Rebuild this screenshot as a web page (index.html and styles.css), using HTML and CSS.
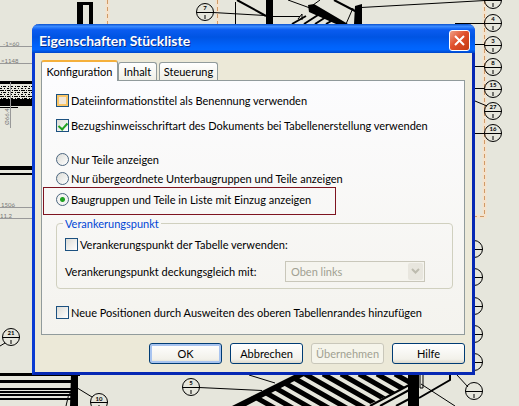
FILE: index.html
```html
<!DOCTYPE html>
<html lang="de">
<head>
    <meta charset="UTF-8">
    <meta name="viewport" content="width=device-width, initial-scale=1.0">
    <title>Eigenschaften Stückliste</title>
    <link rel="stylesheet" href="styles.css">
</head>
<body>

    <svg class="drawing" viewBox="0 0 519 406" preserveAspectRatio="xMidYMid slice" aria-hidden="true">
        <defs>
            <pattern id="dots" width="7" height="6" patternUnits="userSpaceOnUse">
                <path d="M0 .5h4M5 .5h1M1 2.5h1M3 2.5h3M0 4.5h2M4 4.5h1" stroke="#000"/>
            </pattern>
            <clipPath id="roof"><path d="M232 406L300 374H412V384L366 406Z"/></clipPath>
            <g id="balloon">
                <circle r="8.5"/>
                <path d="M-8.5 .5h17M0 3v4"/>
            </g>
        </defs>

        <!-- Blattrahmen -->
        <g class="frame-glow">
            <path d="M107.5 0V24M217.5 0V24M484.5 0V216.500H475"/>
        </g>
        <g class="frame">
            <path d="M107.5 0V24M217.5 0V24M484.5 0V216.500H475"/>
        </g>

        <!-- Ansicht oben -->
        <path d="M77 2H93V24H89V5H83V24H77ZM266 0H273V24H266ZM355 6L362 4V24H354ZM308 5L314 4L348 24H336L309 12Z"/>
        <g class="line">
            <path d="M213 12.500L265 15.500M273 16.500H300M235.500 2V24M361 7.500L485 .500M288 0L310 8M298 19L302 14V20M353 8L346 24M313 5L320 0M455 23.500H484M475 44.500H484M475 66.500H484M475 88.500H484M475 101L487 106M475 133.500H484"/>
            <path class="thick" d="M237 0L266 16M334 0L357 12M292 24L306 16M304 24L318 15M315 24L326 17M326 24L333 20"/>
        </g>

        <!-- Ansicht links -->
        <path d="M0 81H32V84H0ZM0 99H32V106H0ZM0 107H18V108H0ZM0 166H32V170H0ZM0 173H32V175H0Z"/>
        <rect y="85" width="32" height="14" fill="url(#dots)"/>
        <g class="measure">
            <path d="M0 46.500H32M0 63.500H32M10.500 82V128M0 207.500H32M0 218.500H32"/>
            <text x="3" y="46">-1×60</text>
            <text x="1" y="63">×1148</text>
            <text x="1" y="207">1506</text>
            <text x="0" y="218">11.2</text>
            <text transform="translate(9 125) rotate(-90)">Ø66.4</text>
        </g>

        <!-- Ansicht unten links -->
        <path d="M0 373H80V376H0ZM0 380H72V383H0ZM0 388H72V390H0ZM0 391H72V393H0ZM0 394H72V396H0ZM0 398H72V400H0ZM71 374H78V406H70Z"/>
        <g class="line">
            <path d="M74 386L92 397M66 406Q67 396 73 388M0 346L5 343"/>
        </g>

        <!-- Ansicht unten -->
        <g class="stripes" clip-path="url(#roof)">
            <path d="M215 374l70 40M233 374l70 40M251 374l70 40M269 374l70 40M287 374l70 40M305 374l70 40M323 374l70 40M341 374l70 40M359 374l70 40M377 374l70 40M395 374l70 40"/>
        </g>
        <path d="M232 406L296 374H308L246 406ZM408 374H419V406H408Z"/>
        <g class="line">
            <path d="M199 387.500L262 390.500M249 375L275 383M421 384L455 406M457 375L468 387M420 374V388H423V374"/>
            <path class="thick" d="M370 406L411 384M380 406L411 389M396 406L411 398M419 398L450 380V374"/>
        </g>

        <!-- Positionsnummern -->
        <g class="balloons">
            <use href="#balloon" x="205" y="12"/>
            <use href="#balloon" x="493" y="0"/>
            <use href="#balloon" x="493" y="23"/>
            <use href="#balloon" x="493" y="45"/>
            <use href="#balloon" x="493" y="67"/>
            <use href="#balloon" x="493" y="89"/>
            <use href="#balloon" x="493" y="111"/>
            <use href="#balloon" x="493" y="133"/>
            <use href="#balloon" x="474" y="249"/>
            <use href="#balloon" x="474" y="277"/>
            <use href="#balloon" x="474" y="306"/>
            <use href="#balloon" x="474" y="334"/>
            <use href="#balloon" x="474" y="362"/>
            <use href="#balloon" x="474" y="391"/>
            <use href="#balloon" x="11" y="337"/>
            <use href="#balloon" x="191" y="387"/>
            <use href="#balloon" x="99" y="402"/>
        </g>
        <g class="numbers">
            <text x="205" y="10">7</text>
            <text x="493" y="21">4</text>
            <text x="493" y="43">3</text>
            <text x="493" y="65">8</text>
            <text x="493" y="87">15</text>
            <text x="493" y="109">27</text>
            <text x="493" y="131">16</text>
            <text x="11" y="335">21</text>
            <text x="191" y="385">5</text>
            <text x="99" y="401">10</text>
        </g>
    </svg>

    <form class="dialog" onsubmit="return false">
        <div class="titlebar">
            <h1>Eigenschaften Stückliste</h1>
            <button type="button" class="close" aria-label="Schließen">
                <svg viewBox="0 0 19 19"><path d="M5 5L14 14M14 5L5 14"/></svg>
            </button>
        </div>

        <div class="content">
            <div class="tabs" role="tablist">
                <button type="button" class="tab active" role="tab" aria-selected="true">Konfiguration</button>
                <button type="button" class="tab" role="tab" aria-selected="false">Inhalt</button>
                <button type="button" class="tab wide" role="tab" aria-selected="false">Steuerung</button>
            </div>

            <div class="pane" role="tabpanel">
                <div class="group checks">
                    <label class="option"><input type="checkbox" class="hot"> Dateiinformationstitel als Benennung verwenden</label>
                    <label class="option"><input type="checkbox" checked> Bezugshinweisschriftart des Dokuments bei Tabellenerstellung verwenden</label>
                </div>

                <div class="group radios">
                    <label class="option"><input type="radio" name="anzeige"> Nur Teile anzeigen</label>
                    <label class="option"><input type="radio" name="anzeige"> Nur übergeordnete Unterbaugruppen und Teile anzeigen</label>
                </div>
                <div class="marked">
                    <label class="option"><input type="radio" name="anzeige" checked> Baugruppen und Teile in Liste mit Einzug anzeigen</label>
                </div>

                <fieldset>
                    <legend>Verankerungspunkt</legend>
                    <label class="option"><input type="checkbox"> Verankerungspunkt der Tabelle verwenden:</label>
                    <div class="anchor">
                        <label for="ecke">Verankerungspunkt deckungsgleich mit:</label>
                        <div class="select">
                            <select id="ecke" disabled>
                                <option>Oben links</option>
                            </select>
                            <svg viewBox="0 0 15 17"><path d="M4 6L7.500 9.500L11 6"/></svg>
                        </div>
                    </div>
                </fieldset>

                <label class="option last"><input type="checkbox"> Neue Positionen durch Ausweiten des oberen Tabellenrandes hinzufügen</label>
            </div>

            <div class="buttons">
                <button type="submit" class="default">OK</button>
                <button type="button">Abbrechen</button>
                <button type="button" disabled>Übernehmen</button>
                <button type="button">Hilfe</button>
            </div>
        </div>
    </form>

</body>
</html>
```
FILE: styles.css
```css
* {
    box-sizing: border-box;
}
body {
    margin: 0;
    padding: 24px 44px 31px 32px;
    background-color: #e6e6dc;
    color: #000;
    font-family: Lato, Tahoma, sans-serif;
    font-size: 11px;
    line-height: 17px;
}
button, select {
    font: inherit;
    color: inherit;
}

/* Zeichnung im Hintergrund */
.drawing {
    position: absolute;
    top: 0;
    left: 0;
    width: 100%;
    height: 100%;
    z-index: -1;
}
.frame, .frame-glow, .line, .balloons, .stripes {
    fill: none;
    stroke: #000;
}
.frame {
    stroke: #d09a66;
    stroke-dasharray: 4 3;
}
.frame-glow {
    stroke: #f4e2cc;
    stroke-width: 4;
}
.thick {
    stroke-width: 2;
}
.stripes {
    stroke-width: 5;
}
.measure {
    fill: #777;
    font-size: 6px;
}
.measure path {
    stroke: #999;
}
.numbers {
    font-size: 6px;
    font-weight: bold;
    text-anchor: middle;
}

/* Dialog */
.dialog {
    background-color: #ece9d8;
    border: solid #0a3bd2;
    border-width: 0 3px 3px;
    border-right-color: #0628b4;
    border-bottom-color: #0628b4;
    border-radius: 7px 7px 0 0;
}
.titlebar {
    display: flex;
    align-items: center;
    justify-content: space-between;
    height: 29px;
    margin: 0 -3px;
    padding: 3px 5px 0 7px;
    border-radius: 7px 7px 0 0;
    background: linear-gradient(#0a50cc, #3c8cff 8%, #0a5cf0 20%, #0054e3 45%, #0062fa 75%, #0066ff 88%, #0046c8);
}
.titlebar h1 {
    margin: 0;
    color: #fff;
    font-size: 14px;
    font-weight: bold;
    text-shadow: 1px 1px #0a2f8c;
}
.close {
    width: 21px;
    height: 21px;
    padding: 0;
    border: 1px solid #fff;
    border-radius: 3px;
    background: linear-gradient(135deg, #f0a088, #e0502c 45%, #c43a12);
}
.close svg {
    display: block;
    fill: none;
    stroke: #fff;
    stroke-width: 2;
}
.content {
    padding: 7px 7px 8px 6px;
}

/* Registerkarten */
.tabs {
    display: flex;
    align-items: flex-end;
}
.tab {
    width: 39px;
    height: 18px;
    margin-right: 2px;
    padding: 0;
    border: 1px solid #919b9c;
    border-bottom: 0;
    border-radius: 3px 3px 0 0;
    background: linear-gradient(#fff, #f0efe6);
}
.tab.wide {
    width: 59px;
}
.tab.active {
    position: relative;
    width: 77px;
    height: 21px;
    margin: 0 0 -1px;
    border-top: 2px solid #f5b03c;
    background: #fcfcfe;
}
.pane {
    padding: 11px 11px 13px 1px;
    border: 1px solid #919b9c;
    background: linear-gradient(#fcfcfe, #f4f3ee);
}
.group {
    display: flex;
    flex-direction: column;
    padding-left: 13px;
}
.checks {
    gap: 8px;
}
.radios {
    gap: 2px;
    margin-top: 17px;
}
.option {
    display: flex;
    align-items: center;
    gap: 2px;
}
.marked {
    width: 293px;
    padding: 3px 0 6px 12px;
    border: 1px solid #7e1420;
}

input {
    appearance: none;
    flex: none;
    width: 13px;
    height: 13px;
    margin: 0;
    border: 1px solid #1c5180;
    background: linear-gradient(135deg, #dcdcd7, #fff);
}
input[type="radio"] {
    border-color: #4c6680;
    border-radius: 50%;
}
input[type="radio"]:checked {
    background: radial-gradient(circle, #21a121 2px, #f4f4f2 3px);
}
input[type="checkbox"]:checked::before {
    content: "";
    display: block;
    width: 4px;
    height: 7px;
    margin: 1px 0 0 3px;
    border: solid #21a121;
    border-width: 0 2px 2px 0;
    transform: rotate(42deg);
}
input.hot {
    background: #f0e6d8;
    box-shadow: inset 0 0 0 2px #f9c566;
}

fieldset {
    margin: 0 0 0 13px;
    padding: 4px 27px 6px 8px;
    border: 1px solid #d0d0bf;
    border-radius: 4px;
}
legend {
    margin-left: -2px;
    padding: 0 2px;
    color: #0046d5;
}
.anchor {
    display: flex;
    align-items: center;
    justify-content: space-between;
    margin-top: 8px;
}
.select {
    position: relative;
    width: 140px;
}
select {
    appearance: none;
    display: block;
    width: 100%;
    height: 21px;
    padding: 0 5px;
    border: 1px solid #c9c7ba;
    border-radius: 0;
    background-color: #f5f4ee;
}
select:disabled {
    color: #a1a192;
    opacity: 1;
}
.select svg {
    position: absolute;
    top: 2px;
    right: 2px;
    width: 15px;
    height: 17px;
    border-radius: 2px;
    background-color: #e8e6de;
    fill: none;
    stroke: #bdbbae;
    stroke-width: 2;
    pointer-events: none;
}
.last {
    margin: 15px 0 0 13px;
}

.buttons {
    display: flex;
    justify-content: flex-end;
    gap: 8px;
    margin-top: 8px;
}
.buttons button {
    width: 73px;
    height: 21px;
    padding: 0;
    border: 1px solid #003c74;
    border-radius: 3px;
    background: linear-gradient(#fff, #f2f1ea 80%, #dcd8cc);
}
.buttons .default {
    box-shadow: inset 0 0 0 2px #a8c4f0;
}
.buttons button:disabled {
    border-color: #c9c7ba;
    background: #f5f4ea;
    color: #a1a192;
}
```
